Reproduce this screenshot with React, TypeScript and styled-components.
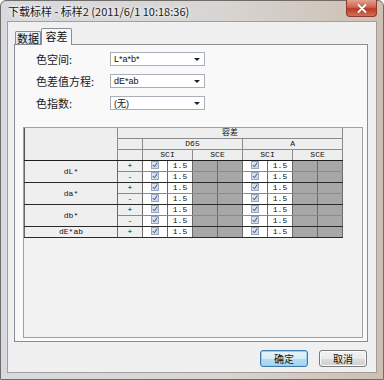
import { Fragment } from "react";
import styled, { createGlobalStyle } from "styled-components";

const GlobalStyle = createGlobalStyle`
  html, body {
    margin: 0;
    padding: 0;
  }
  body {
    width: 384px;
    height: 380px;
    overflow: hidden;
    background: #ffffff;
    font-family: "Noto Sans CJK SC", "Liberation Sans", sans-serif;
  }
`;

const Window = styled.div`
  width: 384px;
  height: 380px;
  box-sizing: border-box;
  display: flex;
  flex-direction: column;
  border: 1px solid #6f6b67;
  border-radius: 6px 6px 0 0;
  padding: 0 6px 6px 6px;
  background: linear-gradient(to right, #d6dadf 0%, #d8d6d4 55%, #cdbfb2 100%);
`;

const TitleBar = styled.div`
  height: 20px;
  display: flex;
  align-items: flex-start;
  justify-content: space-between;
`;

const TitleText = styled.span`
  margin: 3px 0 0 1px;
  font-size: 11px;
  line-height: 14px;
  color: #1b1b1b;
  text-shadow: 0 0 6px #ffffff, 0 0 3px #ffffff;
`;

const CloseButton = styled.div`
  width: 31px;
  height: 17px;
  margin: -1px 0 0 0;
  box-sizing: border-box;
  border: 1px solid #8d3a30;
  border-top: none;
  border-radius: 0 0 4px 4px;
  background: linear-gradient(to bottom, #e3a191 0%, #d0634e 45%, #bd3a24 55%, #d27055 100%);
  display: flex;
  align-items: center;
  justify-content: center;
`;

const Body = styled.div`
  flex: 1;
  display: flex;
  flex-direction: column;
  box-sizing: border-box;
  background: #f0f0f0;
  border: 1px solid #a39e99;
  padding: 6px 8px 0 6px;
`;

const TabStrip = styled.div`
  height: 16px;
  display: flex;
  align-items: flex-end;
  padding-left: 1px;
`;

const Tab = styled.div<{ $active?: boolean }>`
  position: relative;
  box-sizing: border-box;
  border: 1px solid #898c95;
  border-bottom: none;
  border-radius: 2px 2px 0 0;
  font-size: 11px;
  color: #111;
  display: flex;
  justify-content: center;
  ${({ $active }) =>
    $active
      ? `
    width: 31px;
    height: 17px;
    margin-bottom: -1px;
    z-index: 1;
    background: #f9f9f9;
    line-height: 15px;
  `
      : `
    width: 26px;
    height: 13px;
    background: linear-gradient(to bottom, #f2f2f2, #dedede);
    line-height: 12px;
  `}
`;

const Panel = styled.div`
  height: 298px;
  box-sizing: border-box;
  border: 1px solid #898c95;
  background: #f9f9f9;
  display: flex;
  flex-direction: column;
  padding: 7px 4px 3px 8px;
`;

const FormRows = styled.div`
  display: flex;
  flex-direction: column;
  gap: 8px;
  padding-left: 13px;
`;

const FormRow = styled.div`
  display: flex;
  align-items: center;
  height: 14px;
`;

const Label = styled.span`
  width: 74px;
  font-size: 11px;
  color: #1a1a1a;
`;

const Combo = styled.div`
  width: 95px;
  height: 14px;
  box-sizing: border-box;
  border: 1px solid #a9afb8;
  background: #ffffff;
  display: flex;
  align-items: center;
  justify-content: space-between;
  padding: 0 4px 0 3px;
  font-family: "Liberation Sans", "Noto Sans CJK SC", sans-serif;
  font-size: 9px;
  color: #111;
`;

const Arrow = styled.span`
  width: 0;
  height: 0;
  border-left: 3px solid transparent;
  border-right: 3px solid transparent;
  border-top: 3px solid #222;
`;

const GridBox = styled.div`
  flex: 1;
  margin-top: 17px;
  box-sizing: border-box;
  border: 1px solid #a0a0a0;
  background: #f2f2f2;
`;

const Table = styled.table`
  border-collapse: collapse;
  table-layout: fixed;
  width: 318px;
  font-family: "Liberation Mono", "Noto Sans CJK SC", monospace;
  font-size: 8px;
  color: #111;
`;

const HeadCell = styled.th<{ $last?: boolean }>`
  height: 10px;
  padding: 0;
  line-height: 10px;
  font-weight: normal;
  background: #eeeeee;
  border: 1px solid #8c8c8c;
  border-top: none;
  border-left-color: #555;
  ${({ $last }) => $last && `border-bottom: 1px solid #1e1e1e;`}
`;

const Cell = styled.td<{ $kind?: "label" | "sign" | "check" | "value" | "off"; $groupEnd?: boolean }>`
  height: 10px;
  padding: 0;
  line-height: 10px;
  text-align: center;
  border: 1px solid #6a6a6a;
  border-bottom-color: ${({ $groupEnd }) => ($groupEnd ? "#2a2a2a" : "#8a8a8a")};
  background: ${({ $kind }) =>
    $kind === "off" ? "#a7a7a7" : $kind === "check" || $kind === "value" ? "#ffffff" : "#efefef"};
  ${({ $kind }) => $kind === "off" && `border-left-color: #8f8f8f;`}
`;

const CheckMark = styled.span`
  display: inline-block;
  width: 8px;
  height: 8px;
  vertical-align: middle;
  box-sizing: border-box;
  border: 1px solid #9aa7bb;
  background: linear-gradient(to bottom right, #dfe6f2, #c7d3e6);
  position: relative;
  top: -1px;
`;

const Footer = styled.div`
  display: flex;
  justify-content: flex-end;
  gap: 11px;
  padding: 8px 1px 0 0;
`;

const Button = styled.div<{ $primary?: boolean }>`
  width: 48px;
  height: 17px;
  box-sizing: border-box;
  border-radius: 3px;
  font-size: 10px;
  line-height: 15px;
  text-align: center;
  color: #111;
  border: 1px solid ${({ $primary }) => ($primary ? "#3d7bad" : "#7a7a7a")};
  background: ${({ $primary }) =>
    $primary
      ? "linear-gradient(to bottom, #e6f4fc 0%, #d6ecf9 50%, #b5dcf3 51%, #a8d4ef 100%)"
      : "linear-gradient(to bottom, #f2f2f2 0%, #ebebeb 50%, #dddddd 51%, #cfcfcf 100%)"};
  box-shadow: ${({ $primary }) => ($primary ? "inset 0 0 0 1px #8fd0f3" : "inset 0 0 0 1px #fbfbfb")};
`;

type Row = { label?: string; span?: number; sign: string; groupEnd: boolean };

const rows: Row[] = [
  { label: "dL*", span: 2, sign: "+", groupEnd: false },
  { sign: "-", groupEnd: true },
  { label: "da*", span: 2, sign: "+", groupEnd: false },
  { sign: "-", groupEnd: true },
  { label: "db*", span: 2, sign: "+", groupEnd: false },
  { sign: "-", groupEnd: true },
  { label: "dE*ab", span: 1, sign: "+", groupEnd: true },
];

const combos = [
  { label: "色空间:", value: "L*a*b*" },
  { label: "色差值方程:", value: "dE*ab" },
  { label: "色指数:", value: "(无)" },
];

export default function App() {
  return (
    <>
      <GlobalStyle />
      <Window>
        <TitleBar>
          <TitleText>下载标样 - 标样2 (2011/6/1 10:18:36)</TitleText>
          <CloseButton>
            <svg width="10" height="9" viewBox="0 0 10 9">
              <path d="M1.5 1 L8.5 8 M8.5 1 L1.5 8" stroke="#3a1a14" strokeWidth="3" strokeLinecap="round" opacity="0.35" />
              <path d="M1.5 1 L8.5 8 M8.5 1 L1.5 8" stroke="#ffffff" strokeWidth="2" strokeLinecap="round" />
            </svg>
          </CloseButton>
        </TitleBar>
        <Body>
          <TabStrip>
            <Tab>数据</Tab>
            <Tab $active>容差</Tab>
          </TabStrip>
          <Panel>
            <FormRows>
              {combos.map((c) => (
                <FormRow key={c.label}>
                  <Label>{c.label}</Label>
                  <Combo>
                    <span>{c.value}</span>
                    <Arrow />
                  </Combo>
                </FormRow>
              ))}
            </FormRows>
            <GridBox>
              <Table>
                <colgroup>
                  <col style={{ width: 93 }} />
                  {Array.from({ length: 9 }).map((_, i) => (
                    <col key={i} style={{ width: 25 }} />
                  ))}
                </colgroup>
                <thead>
                  <tr>
                    <HeadCell rowSpan={3} $last />
                    <HeadCell colSpan={9}>容差</HeadCell>
                  </tr>
                  <tr>
                    <HeadCell />
                    <HeadCell colSpan={4}>D65</HeadCell>
                    <HeadCell colSpan={4}>A</HeadCell>
                  </tr>
                  <tr>
                    <HeadCell $last />
                    <HeadCell colSpan={2} $last>SCI</HeadCell>
                    <HeadCell colSpan={2} $last>SCE</HeadCell>
                    <HeadCell colSpan={2} $last>SCI</HeadCell>
                    <HeadCell colSpan={2} $last>SCE</HeadCell>
                  </tr>
                </thead>
                <tbody>
                  {rows.map((r, i) => (
                    <tr key={i}>
                      {r.label && (
                        <Cell rowSpan={r.span} $kind="label" $groupEnd>
                          {r.label}
                        </Cell>
                      )}
                      <Cell $kind="sign" $groupEnd={r.groupEnd}>{r.sign}</Cell>
                      {[0, 1].map((k) => (
                        <Fragment key={k}>
                          <Cell $kind="check" $groupEnd={r.groupEnd}>
                            <CheckMark>
                              <svg width="6" height="6" viewBox="0 0 6 6" style={{ position: "absolute", left: 0, top: 0 }}>
                                <path d="M0.8 3 L2.4 4.8 L5.2 0.6" stroke="#3b4f8c" strokeWidth="1" fill="none" />
                              </svg>
                            </CheckMark>
                          </Cell>
                          <Cell $kind="value" $groupEnd={r.groupEnd}>1.5</Cell>
                          <Cell $kind="off" $groupEnd={r.groupEnd} />
                          <Cell $kind="off" $groupEnd={r.groupEnd} />
                        </Fragment>
                      ))}
                    </tr>
                  ))}
                </tbody>
              </Table>
            </GridBox>
          </Panel>
          <Footer>
            <Button $primary>确定</Button>
            <Button>取消</Button>
          </Footer>
        </Body>
      </Window>
    </>
  );
}
